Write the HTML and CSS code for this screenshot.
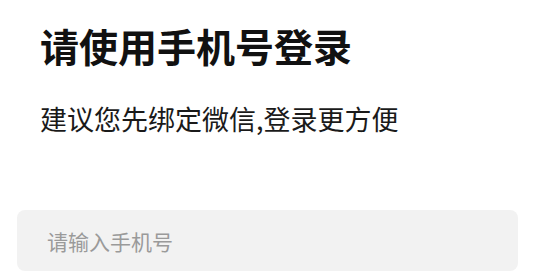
FILE: index.html
```html
<!DOCTYPE html>
<html lang="zh-CN">
<head>
    <meta charset="UTF-8">
    <meta name="viewport" content="width=device-width, initial-scale=1.0">
    <title>手机号登录</title>
    <link rel="stylesheet" href="styles.css">
</head>
<body>
    <div class="login">
        <h1 class="title">请使用手机号登录</h1>
        <p class="subtitle">建议您先绑定微信,登录更方便</p>
        <input class="phone" type="tel" placeholder="请输入手机号">
    </div>
</body>
</html>
```

FILE: styles.css
```css
body {
    margin: 0;
    background: #fff;
    font-family: "Noto Sans CJK SC", "Noto Sans", sans-serif;
    color: #1a1a1a;
}

.login {
    padding: 17px 16px 0 17px;
}

.title {
    margin: 0;
    padding-left: 23px;
    font-size: 39px;
    font-weight: 700;
    line-height: 56px;
    color: #111;
}

.subtitle {
    margin: 26px 0 0;
    padding-left: 23px;
    font-size: 27px;
    line-height: 40px;
    color: #1a1a1a;
}

.phone {
    display: block;
    box-sizing: border-box;
    width: 100%;
    height: 61px;
    margin-top: 71px;
    padding: 0 30px;
    border: none;
    border-radius: 8px;
    background: #f2f2f2;
    font-family: inherit;
    font-size: 21px;
    outline: none;
}

.phone::placeholder {
    color: #9a9a9a;
}
```
